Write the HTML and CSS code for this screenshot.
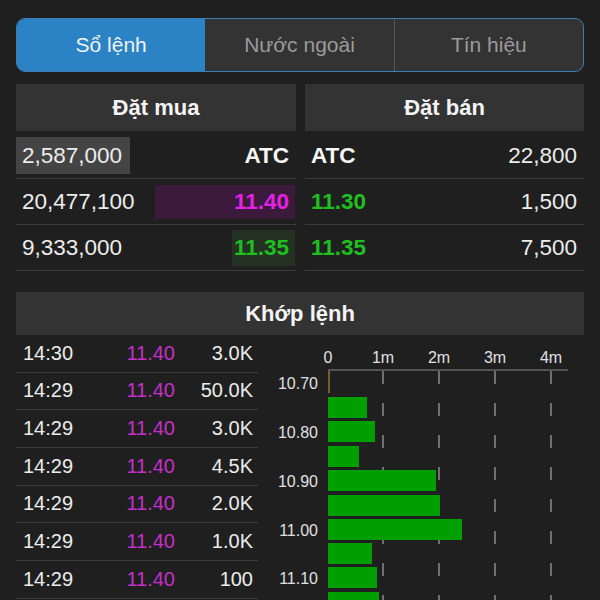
FILE: index.html
```html
<!DOCTYPE html>
<html lang="vi">
<head>
<meta charset="utf-8">
<title>Sổ lệnh</title>
<link rel="stylesheet" href="styles.css">
</head>
<body>
<div class="page">
  <div class="segments">
    <div class="seg active">Sổ lệnh</div>
    <div class="seg">Nước ngoài</div>
    <div class="seg divided">Tín hiệu</div>
  </div>

  <div class="book">
    <div class="side buy">
      <div class="side-head">Đặt mua</div>
      <div class="row">
        <span class="qty qty-box">2,587,000</span>
        <span class="price white">ATC</span>
      </div>
      <div class="row">
        <span class="qty">20,477,100</span>
        <span class="price magenta purple-box">11.40</span>
      </div>
      <div class="row">
        <span class="qty">9,333,000</span>
        <span class="price green green-box">11.35</span>
      </div>
    </div>
    <div class="side sell">
      <div class="side-head">Đặt bán</div>
      <div class="row">
        <span class="price white">ATC</span>
        <span class="qty">22,800</span>
      </div>
      <div class="row">
        <span class="price green">11.30</span>
        <span class="qty">1,500</span>
      </div>
      <div class="row">
        <span class="price green">11.35</span>
        <span class="qty">7,500</span>
      </div>
    </div>
  </div>

  <div class="match-head">Khớp lệnh</div>

  <div class="match">
    <div class="trades">
      <div class="trade"><span class="t">14:30</span><span class="p">11.40</span><span class="v">3.0K</span></div>
      <div class="trade"><span class="t">14:29</span><span class="p">11.40</span><span class="v">50.0K</span></div>
      <div class="trade"><span class="t">14:29</span><span class="p">11.40</span><span class="v">3.0K</span></div>
      <div class="trade"><span class="t">14:29</span><span class="p">11.40</span><span class="v">4.5K</span></div>
      <div class="trade"><span class="t">14:29</span><span class="p">11.40</span><span class="v">2.0K</span></div>
      <div class="trade"><span class="t">14:29</span><span class="p">11.40</span><span class="v">1.0K</span></div>
      <div class="trade"><span class="t">14:29</span><span class="p">11.40</span><span class="v">100</span></div>
    </div>
    <svg class="chart" width="342" height="265" viewBox="0 0 342 265">
      <g class="grid">
        <line x1="125" y1="36" x2="125" y2="265"/>
        <line x1="181" y1="36" x2="181" y2="265"/>
        <line x1="237" y1="36" x2="237" y2="265"/>
        <line x1="293" y1="36" x2="293" y2="265"/>
      </g>
      <line class="axis" x1="70" y1="35" x2="310" y2="35"/>
      <g class="xlab">
        <text x="70" y="28">0</text>
        <text x="125" y="28">1m</text>
        <text x="181" y="28">2m</text>
        <text x="237" y="28">3m</text>
        <text x="293" y="28">4m</text>
      </g>
      <g class="ylab">
        <text x="60" y="54">10.70</text>
        <text x="60" y="103">10.80</text>
        <text x="60" y="152">10.90</text>
        <text x="60" y="201">11.00</text>
        <text x="60" y="249">11.10</text>
      </g>
      <rect class="bar-ref" x="70" y="36" width="2" height="22"/>
      <g class="bars">
        <rect x="70" y="62" width="39" height="21"/>
        <rect x="70" y="86" width="47" height="21"/>
        <rect x="70" y="111" width="31" height="21"/>
        <rect x="70" y="135" width="108" height="21"/>
        <rect x="70" y="160" width="112" height="21"/>
        <rect x="70" y="184" width="134" height="21"/>
        <rect x="70" y="208" width="44" height="21"/>
        <rect x="70" y="232" width="49" height="21"/>
        <rect x="70" y="257" width="51" height="21"/>
      </g>
    </svg>
  </div>
</div>
</body>
</html>
```

FILE: styles.css
```css
html, body {
  margin: 0;
  padding: 0;
  background: #1f1f1f;
  height: 600px;
  overflow: hidden;
}

.page {
  padding: 18px 16px 0 16px;
  font-family: "Liberation Sans", Arial, sans-serif;
  color: #ececec;
}

.segments {
  display: flex;
  height: 54px;
  box-sizing: border-box;
  border: 1.5px solid #3b7db4;
  border-radius: 9px;
  overflow: hidden;
  background: #333333;
}

.seg {
  flex: 1;
  display: flex;
  align-items: center;
  justify-content: center;
  font-size: 21px;
  color: #9a9a9a;
}

.seg.active {
  background: #2b82c4;
  color: #eef4fa;
}

.seg.divided {
  border-left: 1px solid #555555;
}

.book {
  display: grid;
  grid-template-columns: 280px 279px;
  column-gap: 9px;
  margin-top: 12px;
}

.side-head {
  height: 47px;
  background: #333333;
  display: flex;
  align-items: center;
  justify-content: center;
  font-size: 22px;
  font-weight: bold;
  color: #f4f4f4;
  margin-bottom: 2px;
}

.row {
  height: 45px;
  border-bottom: 1px solid #3a3a3a;
  display: flex;
  align-items: center;
  justify-content: space-between;
  font-size: 22.5px;
}

.buy .row {
  padding-right: 1px;
}

.sell .row {
  padding-left: 6px;
  padding-right: 7px;
}

.buy .qty {
  padding-left: 6px;
}

.qty {
  color: #ececec;
}

.qty-box {
  background: #444444;
  height: 37px;
  line-height: 37px;
  width: 108px;
}

.price {
  font-weight: bold;
}

.buy .price {
  padding-right: 6px;
  text-align: right;
  box-sizing: border-box;
}

.white { color: #f6f6f6; }
.magenta { color: #e422e4; }
.green { color: #1fbf1f; }

.purple-box {
  background: #3b1a3b;
  width: 140px;
  height: 34px;
  line-height: 34px;
}

.green-box {
  background: #233223;
  width: 63px;
  height: 36px;
  line-height: 36px;
}

.match-head {
  margin-top: 21px;
  height: 43px;
  background: #333333;
  display: flex;
  align-items: center;
  justify-content: center;
  font-size: 22px;
  font-weight: bold;
  color: #f4f4f4;
}

.match {
  display: flex;
  align-items: flex-start;
}

.trades {
  width: 242px;
  flex: none;
}

.trade {
  display: grid;
  grid-template-columns: 90px 69px 83px;
  height: 36.67px;
  border-bottom: 1px solid #3a3a3a;
  align-items: center;
  font-size: 20px;
}

.trade .t {
  padding-left: 7px;
  color: #ececec;
}

.trade .p {
  text-align: right;
  color: #c42fc8;
}

.trade .v {
  text-align: right;
  padding-right: 5px;
  color: #ececec;
}

.chart {
  display: block;
  flex: none;
}

.chart .grid line {
  stroke: #8c8c8c;
  stroke-width: 1.5;
  stroke-dasharray: 13 19;
}

.chart .axis {
  stroke: #666666;
  stroke-width: 1.5;
}

.chart text {
  font-family: "Liberation Sans", Arial, sans-serif;
  font-size: 16px;
  fill: #e0e0e0;
}

.chart .xlab text {
  text-anchor: middle;
}

.chart .ylab text {
  text-anchor: end;
}

.chart .bar-ref {
  fill: #7a5a30;
}

.chart .bars rect {
  fill: #009f00;
}
```
